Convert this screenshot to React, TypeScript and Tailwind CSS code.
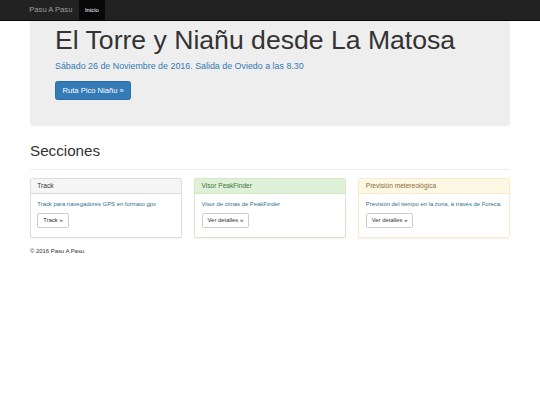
const font = { fontFamily: '"Liberation Sans", Arial, sans-serif' };

type Panel = {
  title: string;
  text: string;
  button: string;
  header: string;
  border: string;
};

const panels: Panel[] = [
  {
    title: "Track",
    text: "Track para navegadores GPS en formato gpx",
    button: "Track »",
    header: "bg-[#f5f5f5] text-[#333] border-[#ddd]",
    border: "border-[#ddd]",
  },
  {
    title: "Visor PeakFinder",
    text: "Visor de cimas de PeakFinder",
    button: "Ver detalles »",
    header: "bg-[#dff0d8] text-[#3c763d] border-[#d6e9c6]",
    border: "border-[#d6e9c6]",
  },
  {
    title: "Previsión metereológica",
    text: "Previsión del tiempo en la zona, a través de Foreca.",
    button: "Ver detalles »",
    header: "bg-[#fcf8e3] text-[#8a6d3b] border-[#faebcc]",
    border: "border-[#faebcc]",
  },
];

export default function App() {
  return (
    <div className="min-h-[405px] w-[540px] bg-white text-[#333]" style={font}>
      {/* navbar */}
      <nav className="flex h-[21px] items-stretch border-b border-[#080808] bg-[#222]">
        <div className="flex w-full items-stretch pl-[23px]">
          <a className="flex items-center px-[6.3px] text-[7.6px] text-[#9d9d9d]">Pasu A Pasu</a>
          <a className="flex items-center bg-[#080808] px-[6.3px] text-[5.9px] text-white">Inicio</a>
        </div>
      </nav>

      <div className="mx-[30px]">
        {/* jumbotron */}
        <div className="rounded-b-[3px] bg-[#eee] pt-[5px] pb-[26px] pl-[25px]">
          <h1 className="text-[26.6px] leading-[1.1] text-[#333]">El Torre y Niañu desde La Matosa</h1>
          <p className="mt-[5px] text-[8.9px] leading-[12.7px] text-[#337ab7]">
            Sábado 26 de Noviembre de 2016. Salida de Oviedo a las 8.30
          </p>
          <a className="mt-[8px] flex h-[19px] w-fit items-center rounded-[2.5px] border border-[#2e6da4] bg-[#337ab7] px-[6.5px] text-[7.6px] text-white">
            Ruta Pico Niañu »
          </a>
        </div>

        {/* secciones */}
        <div className="mt-[17px] border-b border-[#eee] pb-[9px]">
          <h2 className="text-[15.2px] leading-[1.1]">Secciones</h2>
        </div>

        <div className="mt-[8px] grid grid-cols-3 gap-x-[12.66px]">
          {panels.map((p) => (
            <div key={p.title} className={`rounded-[2px] border bg-white shadow-[0_0.5px_1px_rgba(0,0,0,0.05)] ${p.border}`}>
              <div className={`flex h-[15.5px] items-center rounded-t-[2px] border-b px-[6.3px] text-[6.6px] ${p.header}`}>
                {p.title}
              </div>
              <div className="px-[6.3px] pt-[6.3px] pb-[9.5px]">
                <p className="text-[5.9px] leading-[8.4px] text-[#31708f]">{p.text}</p>
                <a className="mt-[4.6px] flex h-[14.3px] w-fit items-center rounded-[1.8px] border border-[#ccc] bg-white px-[5px] text-[5.9px] text-[#333]">
                  {p.button}
                </a>
              </div>
            </div>
          ))}
        </div>

        <footer className="mt-[9px] text-[5.9px] leading-[8.4px] text-[#333]">© 2016 Pasu A Pasu.</footer>
      </div>
    </div>
  );
}
